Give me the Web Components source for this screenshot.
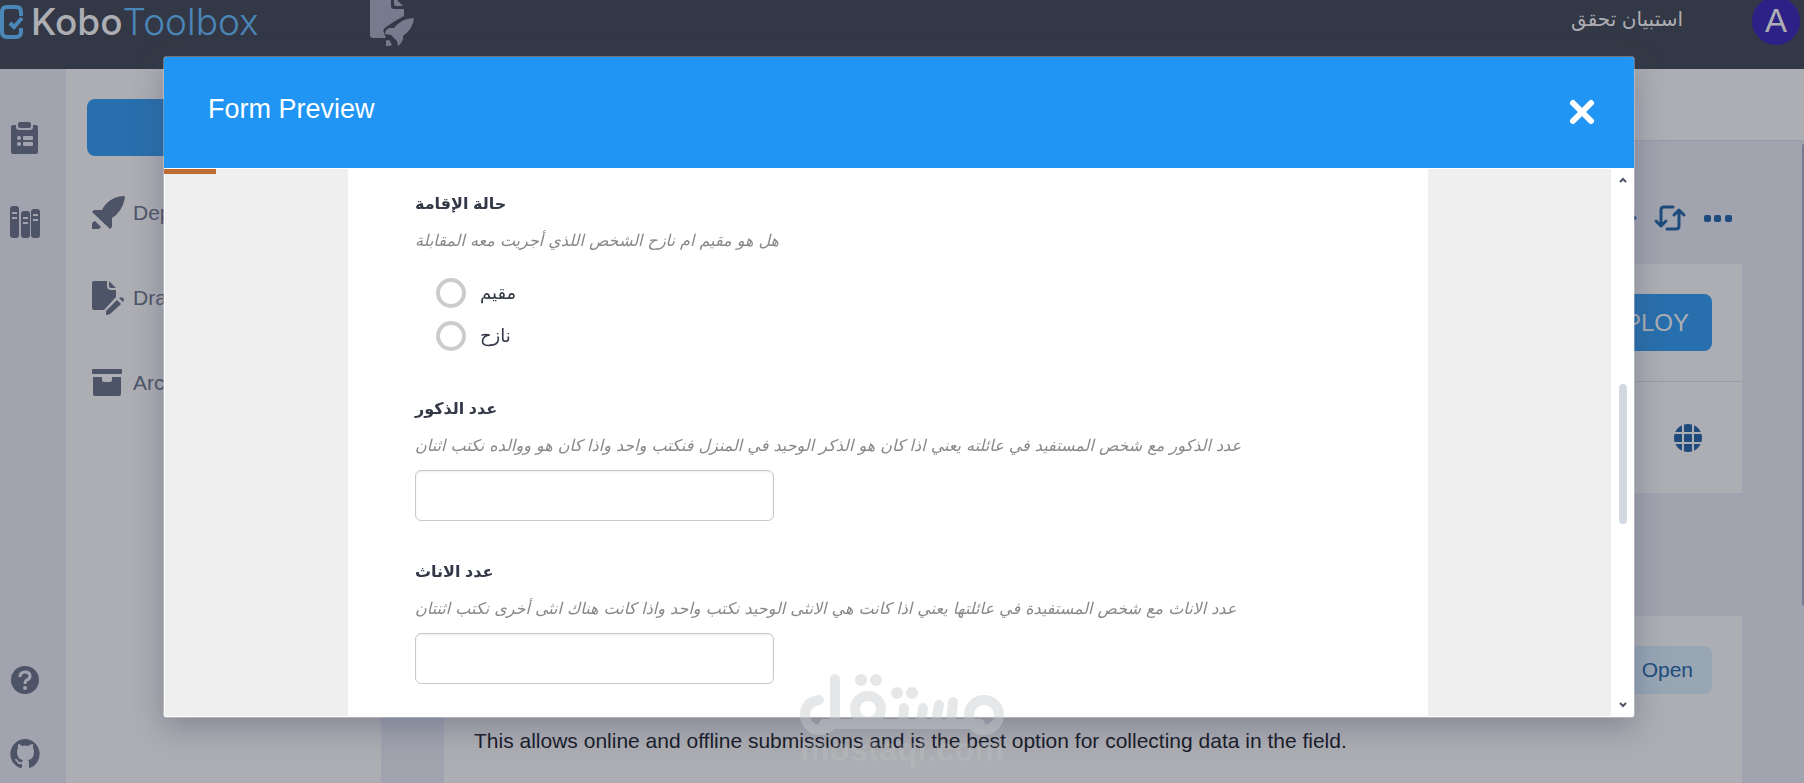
<!DOCTYPE html>
<html lang="en">
<head>
<meta charset="utf-8">
<title>KoboToolbox</title>
<style>
    body {
        margin: 0;
        font-family: "Liberation Sans", "DejaVu Sans", sans-serif;
        font-size: 20px;
        overflow: hidden;
    }
</style>
</head>
<body>
<kobo-app></kobo-app>

<script>
const icons = {
    logo: `<path d="M21 12V8q0-5-5-5H7Q2 3 2 8v20q0 5 5 5h9q5 0 5-5v-4" fill="none" stroke="currentColor" stroke-width="4"/><path d="M10 19l4 4 8-9" fill="none" stroke="currentColor" stroke-width="4"/>`,
    asset: `<path d="M1-3h21v9q0 3 3 3h10v7l-9 5-9 6q-4 3-2 6l2 5H4q-3 0-3-3z"/><path d="M25-3l9 9h-7q-2 0-2-2z"/><path d="M45 18q-12 0-20 10h-5q-4 2-4 6l6 1 6 6 1 5q4-3 5-7v-3q10-7 11-18z"/><path d="M17 41q2-2 4 0l2 4q-1 1-6 1z"/>`,
    clipboard: `<path d="M2 3h3v2q0 3 3 3h11q3 0 3-3V3h3q2 0 2 2v25q0 2-2 2H2q-2 0-2-2V5q0-2 2-2z"/><rect x="7" y="0" width="13" height="6" rx="2"/><g fill="#a1a4ae"><circle cx="8" cy="16" r="2"/><circle cx="8" cy="22" r="2"/><rect x="12" y="14" width="10" height="4" rx="1"/><rect x="12" y="20" width="10" height="4" rx="1"/></g>`,
    library: `<rect x="0" y="0" width="9" height="32" rx="3"/><rect x="11" y="5" width="9" height="27" rx="3"/><rect x="21" y="3" width="9" height="29" rx="3"/><g fill="#a1a4ae"><rect x="2" y="6" width="5" height="2"/><rect x="2" y="11" width="5" height="2"/><rect x="13" y="11" width="5" height="2"/><rect x="13" y="16" width="5" height="2"/><rect x="23" y="8" width="5" height="2"/><rect x="23" y="13" width="5" height="2"/></g>`,
    help: `<circle cx="14" cy="14" r="14"/><path d="M9 11q0-5 5-5 5 0 5 4 0 3-3 4-2 1-2 4" fill="none" stroke="#a1a4ae" stroke-width="3"/><circle cx="14" cy="22" r="2" fill="#a1a4ae"/>`,
    github: `<path d="M15 0a15 15 0 0 0-5 29q2 0 2-1v-3q-4 1-5-2l-2-2q-1-1 1-1 1 0 2 2 2 2 4 1l1-2q-6-1-6-8 0-2 1-4 0-2 0-4 2 0 4 2 3-1 6 0 3-2 5-2 0 2 0 4 1 2 1 4 0 7-6 8 1 1 1 3v4q0 1 1 1A15 15 0 0 0 15 0z"/>`,
    rocket: `<path d="M32 0Q22 0 14 8q-2 2-4 6H2l-2 2 18 17q2-1 2-3v-8q10-6 13-20 0-2-1-2z"/><path d="M3 25l6 6-2 2H0v-5q0-2 3-3z"/>`,
    draft: `<path d="M2 0h13v5q0 4 4 4h5v7L12 29H2q-2 0-2-2V2Q0 0 2 0z"/><path d="M17 0l7 7h-5q-2 0-2-2z"/><path d="M25 19l4 4-11 10q-2 1-4 1v-4z"/><path d="M27 17q3-2 5 1 0 2-1 3z"/>`,
    archive: `<rect x="0" y="0" width="30" height="5" rx="1"/><path d="M1 8h9v3q0 2 2 2h6q2 0 2-2V8h9v17q0 2-2 2H3q-2 0-2-2z"/>`,
    replace: `<path d="M18 2h-9q-3 0-3 3v16M1 16l5 5 5-5M12 24h9q3 0 3-3V5M19 10l5-5 5 5" fill="none" stroke="currentColor" stroke-width="3" stroke-linecap="round" stroke-linejoin="round"/>`,
    more: `<rect x="0" y="0" width="7" height="7" rx="2"/><rect x="10" y="0" width="7" height="7" rx="2"/><rect x="21" y="0" width="7" height="7" rx="2"/>`,
    edit: `<path d="M20 0h3l4 4-4 4h-3z"/>`,
    globe: `<circle cx="14" cy="14" r="14"/><path d="M9 0v28M19 0v28M0 9h28M0 19h28" stroke="#adaeb3" stroke-width="2"/>`,
    close: `<path d="M4 4l18 18M22 4L4 22" stroke="currentColor" stroke-width="6" stroke-linecap="round"/>`,
    up: `<path d="M1 5l3-3 3 3" fill="none" stroke="currentColor" stroke-width="2"/>`,
    down: `<path d="M1 1l3 3 3-3" fill="none" stroke="currentColor" stroke-width="2"/>`
};

class KIcon extends HTMLElement {
    connectedCallback() {
        const w = this.getAttribute("w");
        const h = this.getAttribute("h");
        this.attachShadow({ mode: "open" }).innerHTML = `
        <style>
        :host { display: inline-flex; flex: none; }
        svg { display: block; overflow: visible; }
        </style>
        <svg width="${w}" height="${h}" viewBox="0 0 ${w} ${h}" fill="currentColor" aria-hidden="true">${icons[this.getAttribute("name")]}</svg>
        `;
    }
}
customElements.define("k-icon", KIcon);

class TopBar extends HTMLElement {
    connectedCallback() {
        this.attachShadow({ mode: "open" }).innerHTML = `
        <style>
        :host {
            display: flex;
            height: 69px;
            background: #333846;
            color: #adaeb3;
            align-items: flex-start;
            overflow: hidden;
        }
        .brand {
            display: flex;
            width: 369px;
            gap: 8px;
            padding-top: 4px;
            box-sizing: border-box;
            color: #4a86b8;
            text-decoration: none;
            font: 300 37px/36px Inter, sans-serif;
        }
        .brand b {
            color: #adaeb3;
            font-weight: 500;
        }
        .asset { color: #787b8e; }
        .title {
            flex: 1;
            text-align: right;
            padding: 4px 69px 0 0;
            font-size: 20px;
            line-height: 30px;
        }
        .account {
            width: 48px;
            height: 48px;
            margin: -3px 4px 0 0;
            border: 0;
            padding: 0;
            border-radius: 50%;
            background: #2d2187;
            color: #adaeb3;
            font: 33px/48px "Liberation Sans", sans-serif;
        }
        </style>
        <a class="brand" href="#"><k-icon name="logo" w="23" h="34"></k-icon><span><b>Kobo</b>Toolbox</span></a>
        <k-icon class="asset" name="asset" w="46" h="46"></k-icon>
        <span class="title">استبيان تحقق</span>
        <button class="account">A</button>
        `;
    }
}
customElements.define("top-bar", TopBar);

class NavRail extends HTMLElement {
    connectedCallback() {
        this.attachShadow({ mode: "open" }).innerHTML = `
        <style>
        :host {
            display: flex;
            flex-direction: column;
            align-items: center;
            box-sizing: border-box;
            width: 66px;
            padding: 53px 17px 14px 0;
            background: #a1a4ae;
            color: #4e5468;
        }
        a { color: inherit; display: flex; }
        nav { display: flex; flex-direction: column; align-items: center; gap: 52px; }
        .foot { margin-top: auto; gap: 45px; }
        </style>
        <nav>
            <a href="#" aria-label="Projects"><k-icon name="clipboard" w="27" h="32"></k-icon></a>
            <a href="#" aria-label="Library"><k-icon name="library" w="30" h="32"></k-icon></a>
        </nav>
        <nav class="foot">
            <a href="#" aria-label="Help"><k-icon name="help" w="28" h="28"></k-icon></a>
            <a href="#" aria-label="GitHub"><k-icon name="github" w="30" h="30"></k-icon></a>
        </nav>
        `;
    }
}
customElements.define("nav-rail", NavRail);

class ProjectList extends HTMLElement {
    connectedCallback() {
        this.attachShadow({ mode: "open" }).innerHTML = `
        <style>
        :host {
            display: block;
            box-sizing: border-box;
            width: 315px;
            padding: 30px 21px;
            background: #adaeb3;
            color: #4e5468;
        }
        .new {
            display: block;
            width: 100%;
            height: 57px;
            border: 0;
            border-radius: 8px;
            background: #276fad;
            margin-bottom: 14px;
        }
        a {
            display: flex;
            align-items: center;
            height: 85px;
            padding-left: 5px;
            gap: 8px;
            color: inherit;
            text-decoration: none;
            font-size: 21px;
        }
        k-icon { width: 33px; }
        </style>
        <button class="new" aria-label="New project"></button>
        <a href="#"><k-icon name="rocket" w="33" h="33"></k-icon>Deployed</a>
        <a href="#"><k-icon name="draft" w="33" h="34"></k-icon>Draft</a>
        <a href="#"><k-icon name="archive" w="30" h="27"></k-icon>Archived</a>
        `;
    }
}
customElements.define("project-list", ProjectList);

class FormPage extends HTMLElement {
    connectedCallback() {
        this.attachShadow({ mode: "open" }).innerHTML = `
        <style>
        :host {
            display: flex;
            flex-direction: column;
            flex: 1;
            min-width: 0;
            background: #a1a4ae;
            color: #1e4b7c;
        }
        .tabs {
            height: 71px;
            background: #adaeb3;
            border-bottom: 1px solid #999ca7;
        }
        .scroller { flex: 1; display: flex; }
        .content {
            flex: 1;
            display: flex;
            flex-direction: column;
            padding: 0 60px 0 63px;
        }
        .tools {
            display: flex;
            justify-content: flex-end;
            align-items: center;
            gap: 19px;
            height: 123px;
            padding: 31px 10px 0 0;
            box-sizing: border-box;
        }
        .tools button, .globe {
            display: flex;
            border: 0;
            padding: 0;
            background: none;
            color: inherit;
        }
        .card { background: #adaeb3; }
        .row {
            display: flex;
            justify-content: flex-end;
            align-items: center;
            height: 117px;
            padding-right: 30px;
            box-sizing: border-box;
        }
        .row + .row {
            height: 112px;
            padding-right: 40px;
            border-top: 1px solid #999ca7;
        }
        .deploy {
            height: 57px;
            border: 0;
            border-radius: 8px;
            padding: 0 23px;
            background: #276fad;
            color: #adaeb3;
            font: 24px "Liberation Sans", sans-serif;
        }
        .collect {
            margin-top: 123px;
            flex: 1;
            padding: 30px 30px 0;
        }
        .collect div { display: flex; justify-content: flex-end; }
        .open {
            height: 48px;
            border: 0;
            border-radius: 8px;
            padding: 0 19px;
            background: #98a6b4;
            color: #1e4b7c;
            font: 21px "Liberation Sans", sans-serif;
        }
        p {
            margin: 34px 0 0;
            color: #171a28;
            font-size: 21px;
            line-height: 26px;
        }
        .thumb {
            width: 2px;
            height: 462px;
            margin-top: 3px;
            border-radius: 2px 0 0 2px;
            background: #777c90;
        }
        </style>
        <div class="tabs"></div>
        <div class="scroller">
            <div class="content">
                <div class="tools">
                    <button aria-label="Edit"><k-icon name="edit" w="26" h="8"></k-icon></button>
                    <button aria-label="Replace form"><k-icon name="replace" w="30" h="26"></k-icon></button>
                    <button aria-label="More actions"><k-icon name="more" w="28" h="7"></k-icon></button>
                </div>
                <section class="card">
                    <div class="row"><button class="deploy">DEPLOY</button></div>
                    <div class="row"><button class="globe" aria-label="Languages"><k-icon name="globe" w="28" h="28"></k-icon></button></div>
                </section>
                <section class="card collect">
                    <div><button class="open">Open</button></div>
                    <p>This allows online and offline submissions and is the best option for collecting data in the field.</p>
                </section>
            </div>
            <div class="thumb"></div>
        </div>
        `;
    }
}
customElements.define("form-page", FormPage);

class FormQuestion extends HTMLElement {
    connectedCallback() {
        const options = this.getAttribute("options");
        const label = this.getAttribute("label");
        let control = `<input class="text" type="text" id="answer" aria-describedby="hint">`;
        if (options) {
            control = options.split(",").map(option => `
            <label class="option"><input type="radio" name="answer"><span>${option}</span></label>`).join("");
            control = `<div class="options" role="radiogroup" aria-labelledby="label">${control}</div>`;
        }
        this.attachShadow({ mode: "open" }).innerHTML = `
        <style>
        :host {
            display: block;
            margin-bottom: 39px;
            color: #333846;
        }
        .label {
            display: block;
            font-weight: bold;
            font-size: 16px;
            line-height: 24px;
            margin-bottom: 13px;
        }
        .hint {
            color: #888;
            font-style: italic;
            font-family: "DejaVu Sans", sans-serif;
            font-size: 16px;
            line-height: 24px;
            white-space: nowrap;
        }
        .text {
            display: block;
            box-sizing: border-box;
            width: 38%;
            height: 51px;
            margin-top: 12px;
            border: 1px solid #c6c9ce;
            border-radius: 6px;
            box-shadow: inset 0 1px 2px rgba(0, 0, 0, 0.08);
            padding: 8px 16px;
            font: inherit;
        }
        .options { padding: 18px 0 1px 21px; }
        .option {
            display: flex;
            align-items: center;
            gap: 14px;
            height: 43px;
            font-size: 18px;
        }
        .option input {
            appearance: none;
            box-sizing: border-box;
            width: 30px;
            height: 30px;
            margin: 0;
            border: 4px solid #ccc;
            border-radius: 50%;
        }
        </style>
        ${options ? `<div class="label" id="label">${label}</div>` : `<label class="label" for="answer">${label}</label>`}
        <div class="hint" id="hint"><slot></slot></div>
        ${control}
        `;
    }
}
customElements.define("form-question", FormQuestion);

class PreviewModal extends HTMLElement {
    connectedCallback() {
        this.attachShadow({ mode: "open" }).innerHTML = `
        <style>
        :host {
            display: flex;
            flex-direction: column;
            box-sizing: border-box;
            border: 1px solid rgba(255, 255, 255, 0.3);
            border-radius: 4px;
            overflow: hidden;
            background: white;
            background-clip: padding-box;
            box-shadow: 0 10px 30px rgba(70, 76, 104, 0.4);
        }
        header {
            display: flex;
            justify-content: space-between;
            align-items: center;
            height: 111px;
            box-sizing: border-box;
            padding: 0 39px 8px 44px;
            background: #2095f3;
            color: white;
        }
        h1 {
            margin: 0;
            font: 400 27px/36px "Liberation Sans", sans-serif;
        }
        header button {
            display: flex;
            border: 0;
            padding: 7px 0 0;
            background: none;
            color: white;
        }
        .progress {
            width: 52px;
            height: 5px;
            background: #bd6c33;
            margin: 1px 0 -6px;
            z-index: 1;
        }
        .body {
            flex: 1;
            min-height: 0;
            display: flex;
            border: 1px solid white;
            border-right: 0;
        }
        .page {
            flex: 1;
            padding: 0 183px;
            background: #efefef;
            overflow: hidden;
        }
        .sheet {
            height: 100%;
            box-sizing: border-box;
            padding: 23px 67px 0;
            background: white;
        }
        .scroll {
            display: flex;
            flex-direction: column;
            align-items: center;
            justify-content: space-between;
            width: 23px;
            padding: 8px 0;
            box-sizing: border-box;
            color: #4e5468;
        }
        .thumb {
            width: 8px;
            height: 140px;
            border-radius: 4px;
            background: #d3d9e2;
        }
        .space { flex: 17; }
        .space.after { flex: 15; }
        </style>
        <header>
            <h1><slot name="title"></slot></h1>
            <button aria-label="Close"><k-icon name="close" w="26" h="26"></k-icon></button>
        </header>
        <div class="progress"></div>
        <div class="body">
            <div class="page"><div class="sheet"><slot></slot></div></div>
            <div class="scroll">
                <k-icon name="up" w="8" h="6"></k-icon>
                <div class="space"></div>
                <div class="thumb"></div>
                <div class="space after"></div>
                <k-icon name="down" w="8" h="6"></k-icon>
            </div>
        </div>
        `;
    }
}
customElements.define("preview-modal", PreviewModal);

class WaterMark extends HTMLElement {
    connectedCallback() {
        this.attachShadow({ mode: "open" }).innerHTML = `
        <style>
        :host {
            display: flex;
            flex-direction: column;
            align-items: center;
            opacity: 0.45;
            color: #c8cbce;
            pointer-events: none;
        }
        svg { display: block; }
        span {
            font: bold 33px/36px "Liberation Sans", sans-serif;
            margin-top: -4px;
            opacity: 0.5;
        }
        </style>
        <svg width="204" height="62" viewBox="0 0 204 62" fill="none" stroke="currentColor" stroke-width="10" stroke-linecap="round" aria-hidden="true">
            <path d="M19 26q-14 2-14 15a15 15 0 0 0 30 0V5"/>
            <circle cx="68" cy="35" r="13"/>
            <path d="M24 50H180M104 34l-1 14M123 34l-2 14M139 31l-3 17M153 28l-2 20"/>
            <ellipse cx="184" cy="41" rx="15" ry="15"/>
            <g fill="currentColor" stroke="none">
                <circle cx="61" cy="6" r="6"/><circle cx="76" cy="6" r="6"/>
                <circle cx="97" cy="19" r="6"/><circle cx="112" cy="19" r="6"/>
            </g>
        </svg>
        <span>mostaql.com</span>
        `;
    }
}
customElements.define("water-mark", WaterMark);

class KoboApp extends HTMLElement {
    connectedCallback() {
        this.attachShadow({ mode: "open" }).innerHTML = `
        <style>
        :host {
            display: flex;
            flex-direction: column;
            height: 100vh;
            overflow: hidden;
        }
        main { flex: 1; min-height: 0; display: flex; }
        .backdrop {
            position: fixed;
            inset: 0;
            display: grid;
            padding: 56px 169px 65px 163px;
        }
        preview-modal { min-width: 0; min-height: 0; }
        water-mark {
            position: fixed;
            left: 50%;
            bottom: 15px;
            transform: translateX(-50%);
        }
        </style>
        <top-bar></top-bar>
        <main>
            <nav-rail></nav-rail>
            <project-list></project-list>
            <form-page></form-page>
        </main>
        <div class="backdrop">
            <preview-modal role="dialog">
                <span slot="title">Form Preview</span>
                <form-question label="حالة الإقامة" options="مقيم,نازح">هل هو مقيم ام نازح الشخص اللذي أجريت معه المقابلة</form-question>
                <form-question label="عدد الذكور">عدد الذكور مع شخص المستفيد في عائلته يعني اذا كان هو الذكر الوحيد في المنزل فنكتب واحد واذا كان هو ووالده نكتب اثنان</form-question>
                <form-question label="عدد الاناث">عدد الاناث مع شخص المستفيدة في عائلتها يعني اذا كانت هي الانثى الوحيد نكتب واحد واذا كانت هناك انثى أخرى نكتب اثنتان</form-question>
            </preview-modal>
        </div>
        <water-mark></water-mark>
        `;
    }
}
customElements.define("kobo-app", KoboApp);
</script>
</body>
</html>
